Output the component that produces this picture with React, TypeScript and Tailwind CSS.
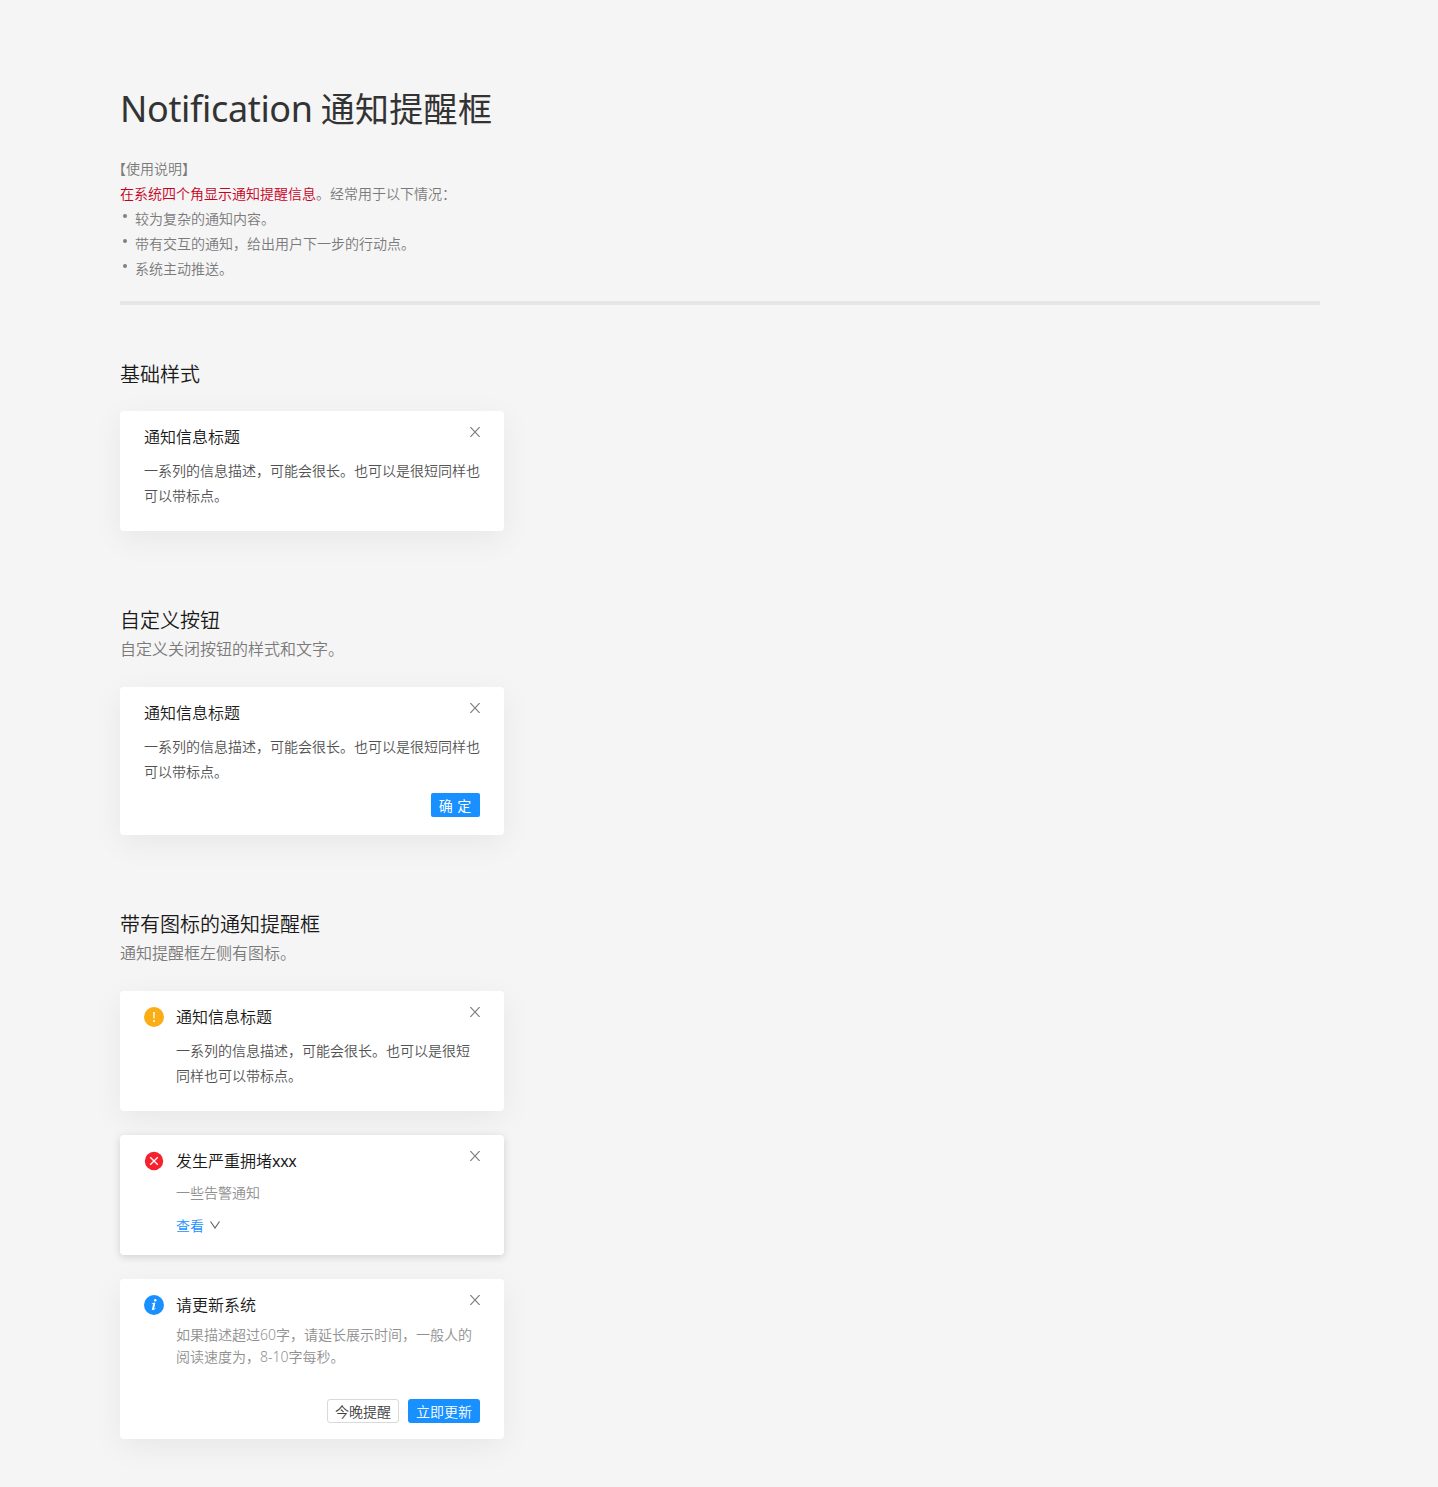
import type { ReactNode } from 'react';

function CloseIcon() {
  return (
    <svg className="absolute top-4 right-6 h-[10px] w-[10px]" viewBox="0 0 10 10" fill="none" stroke="#808080" strokeWidth="1.2">
      <path d="M0.3 0 9.7 10M9.7 0 0.3 10" />
    </svg>
  );
}

function WarningIcon() {
  return (
    <svg className="size-5" viewBox="0 0 20 20">
      <circle cx="10" cy="10" r="10" fill="#faad14" />
      <path d="M9.2 5h1.6l-.2 6.6H9.4z" fill="#fff" />
      <circle cx="10" cy="14" r="1" fill="#fff" />
    </svg>
  );
}

function ErrorIcon() {
  return (
    <svg className="size-5" viewBox="0 0 20 20">
      <circle cx="10" cy="10" r="9.2" fill="#f5222d" />
      <path d="M6.2 6.2l7.6 7.6M13.8 6.2l-7.6 7.6" stroke="#fff" strokeWidth="1.3" />
    </svg>
  );
}

function InfoIcon() {
  return (
    <svg className="size-5" viewBox="0 0 20 20">
      <circle cx="10" cy="10" r="10" fill="#1890ff" />
      <circle cx="11.3" cy="5.2" r="1.2" fill="#fff" />
      <path d="M7.8 8.8 10.8 7.9 9.2 14.2Q9.2 15.4 11.5 13.2" fill="none" stroke="#fff" strokeWidth=".9" />
      <path d="M9.4 8.1h1.8L9.5 14.9H7.8z" fill="#fff" />
    </svg>
  );
}

function Card({ icon, title, className, children }: { icon?: ReactNode; title: ReactNode; className: string; children: ReactNode }) {
  return (
    <article className={`relative flex w-96 gap-3 rounded bg-white px-6 pt-4 ${className}`}>
      {icon}
      <div className="flex flex-1 flex-col">
        <h3 className="text-base leading-5 text-[#1a1a1a]">{title}</h3>
        {children}
      </div>
      <CloseIcon />
    </article>
  );
}

function Description({ children }: { children: ReactNode }) {
  return <p className="mt-[11px] text-sm leading-[25px] text-[#525252]">{children}</p>;
}

const softShadow = 'shadow-[0_8px_32px_rgba(0,0,0,0.06)]';

const notes = ['较为复杂的通知内容。', '带有交互的通知，给出用户下一步的行动点。', '系统主动推送。'];

export default function App() {
  return (
    <main className="h-[1487px] w-[1438px] overflow-hidden bg-[#f5f5f5] px-[120px] pt-[84px] font-['Noto_Sans','Noto_Sans_CJK_SC',sans-serif] font-[350]">
      <h1 className="h-[72px] text-[34px] leading-[50px] tracking-[0.3px] whitespace-nowrap text-[#333]">
        <span className="mr-2 text-[36px] font-normal tracking-[-0.35px]">Notification</span>
        <span className="font-normal">通知提醒框</span>
      </h1>

      <div className="text-sm leading-[25px] text-[#7a7a7a]">
        <p className="-ml-2">【使用说明】</p>
        <p>
          <span className="text-[#c7001e]">在系统四个角显示通知提醒信息</span>。经常用于以下情况：
        </p>
        <ul>
          {notes.map((note) => (
            <li key={note} className="flex">
              <span className="mt-2 mr-2 ml-[3px] size-1 rounded-full bg-[#808080]" />
              {note}
            </li>
          ))}
        </ul>
      </div>
      <hr className="mt-5 h-1 w-[1200px] border-0 bg-[#e6e6e6]" />

      <section className="mt-[55px]">
        <h2 className="mb-[21px] text-xl leading-[30px] text-[#1a1a1a]">基础样式</h2>
        <Card title="通知信息标题" className={`h-[120px] ${softShadow}`}>
          <Description>一系列的信息描述，可能会很长。也可以是很短同样也可以带标点。</Description>
        </Card>
      </section>

      <section className="mt-[75px]">
        <h2 className="text-xl leading-[30px] text-[#1a1a1a]">自定义按钮</h2>
        <p className="mb-[25px] text-base leading-[26px] text-[#7a7a7a]">自定义关闭按钮的样式和文字。</p>
        <Card title="通知信息标题" className={`h-[148px] ${softShadow}`}>
          <Description>一系列的信息描述，可能会很长。也可以是很短同样也可以带标点。</Description>
          <button className="mt-[9px] h-6 w-[49px] self-end rounded-xs bg-[#1890ff] pt-px pr-px text-sm leading-6 font-normal text-white [word-spacing:1px]">确 定</button>
        </Card>
      </section>

      <section className="mt-[75px]">
        <h2 className="text-xl leading-[30px] text-[#1a1a1a]">带有图标的通知提醒框</h2>
        <p className="mb-[25px] text-base leading-[26px] text-[#7a7a7a]">通知提醒框左侧有图标。</p>
        <div className="flex flex-col gap-6">
          <Card icon={<WarningIcon />} title="通知信息标题" className={`h-[120px] ${softShadow}`}>
            <Description>一系列的信息描述，可能会很长。也可以是很短同样也可以带标点。</Description>
          </Card>
          <Card
            icon={<ErrorIcon />}
            title={<>发生严重拥堵<span className="font-normal tracking-[-0.3px]">xxx</span></>}
            className="h-[120px] shadow-[0_2px_8px_rgba(0,0,0,0.15)]"
          >
            <p className="mt-[11px] text-sm leading-[22px] text-[#909090]">一些告警通知</p>
            <a className="mt-[11px] flex items-center gap-1.5 text-sm leading-[22px] text-[#1890ff]">
              查看
              <svg className="-mt-0.5 h-2 w-[10px]" viewBox="0 0 10 8" fill="none" stroke="#666" strokeWidth="1.2">
                <path d="M.5.5 5 7 9.5.5" />
              </svg>
            </a>
          </Card>
          <Card icon={<InfoIcon />} title="请更新系统" className={`h-[160px] ${softShadow}`}>
            <p className="mt-[9px] text-sm leading-[22px] text-[#909090]">
              如果描述超过60字，请延长展示时间，一般人的阅读速度为，8-10字每秒。
            </p>
            <div className="mt-[31px] flex justify-end gap-[9px] text-sm">
              <button className="h-6 w-[72px] rounded-[3px] border border-[#d9d9d9] pt-px leading-[22px] text-[#404040]">今晚提醒</button>
              <button className="h-6 w-[72px] rounded-[3px] bg-[#1890ff] pt-px leading-6 text-white">立即更新</button>
            </div>
          </Card>
        </div>
      </section>
    </main>
  );
}
